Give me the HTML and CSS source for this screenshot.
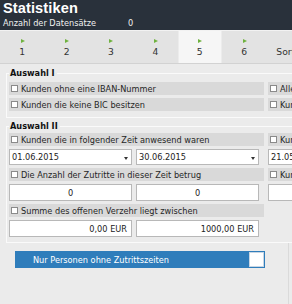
FILE: index.html
```html
<!DOCTYPE html>
<html lang="de">
<head>
<meta charset="utf-8">
<title>Statistiken</title>
<link rel="stylesheet" href="styles.css">
</head>
<body>
<div class="page">
  <header class="header">
    <h1 class="title">Statistiken</h1>
    <div class="count"><span class="count-label">Anzahl der Datensätze</span><span class="count-value">0</span></div>
  </header>
  <nav class="tabs">
    <div class="tab"><span class="arrow"></span><span class="num">1</span></div>
    <div class="tab"><span class="arrow"></span><span class="num">2</span></div>
    <div class="tab"><span class="arrow"></span><span class="num">3</span></div>
    <div class="tab"><span class="arrow"></span><span class="num">4</span></div>
    <div class="tab active"><span class="arrow"></span><span class="num">5</span></div>
    <div class="tab"><span class="arrow"></span><span class="num">6</span></div>
    <div class="tab wide"><span class="arrow hidden"></span><span class="num">Sortierung</span></div>
  </nav>
  <main class="content">
    <fieldset class="group">
      <legend class="legend">Auswahl I</legend>
      <div class="grid">
        <label class="row"><span class="cb"></span>Kunden ohne eine IBAN-Nummer</label>
        <label class="row"><span class="cb"></span>Alle Kunden</label>
        <label class="row"><span class="cb"></span>Kunden die keine BIC besitzen</label>
        <label class="row"><span class="cb"></span>Kunden ohne Mandat</label>
      </div>
    </fieldset>
    <fieldset class="group second">
      <legend class="legend">Auswahl II</legend>
      <div class="grid">
        <label class="row"><span class="cb"></span>Kunden die in folgender Zeit anwesend waren</label>
        <label class="row"><span class="cb"></span>Kunden mit Geburtstag</label>
        <div class="pair">
          <div class="field date">01.06.2015<span class="drop"></span></div>
          <div class="field date">30.06.2015<span class="drop"></span></div>
        </div>
        <div class="pair">
          <div class="field date">21.05.2015<span class="drop"></span></div>
        </div>
        <label class="row"><span class="cb"></span>Die Anzahl der Zutritte in dieser Zeit betrug</label>
        <label class="row"><span class="cb"></span>Kunden mit Karte</label>
        <div class="pair tall">
          <div class="field center">0</div>
          <div class="field center">0</div>
        </div>
        <div class="pair tall">
          <div class="field center"></div>
        </div>
        <label class="row"><span class="cb"></span>Summe des offenen Verzehr liegt zwischen</label>
        <div class="empty"></div>
        <div class="pair tall">
          <div class="field right">0,00 EUR</div>
          <div class="field right">1000,00 EUR</div>
        </div>
        <div class="empty"></div>
      </div>
    </fieldset>
    <section class="panel">
      <div class="toggle">
        <span class="toggle-label">Nur Personen ohne Zutrittszeiten</span>
        <span class="toggle-box"></span>
      </div>
    </section>
  </main>
</div>
</body>
</html>
```
FILE: styles.css
```css
html, body {
  margin: 0;
  padding: 0;
  width: 292px;
  height: 304px;
  overflow: hidden;
  background: #ebebeb;
}
body {
  font-family: "DejaVu Sans", Verdana, sans-serif;
  font-size: 8.2px;
  color: #222;
}
.page {
  width: 292px;
}
.header {
  background: #29313b;
  height: 30px;
  padding: 1px 3px 0 3px;
  box-sizing: border-box;
  color: #fff;
}
.title {
  margin: 0;
  font-family: "Liberation Sans", Arial, sans-serif;
  font-weight: bold;
  font-size: 14.6px;
  line-height: 15px;
  letter-spacing: 0.1px;
}
.count {
  display: flex;
  margin-top: 2px;
  line-height: 10px;
  color: #f0f0f0;
}
.count-label {
  width: 125px;
}
.tabs {
  display: flex;
  height: 34px;
  background: #e3e3e3;
  border-top: 1px solid #f2f2f2;
  border-bottom: 1px solid #d2d2d2;
  box-sizing: border-box;
  width: 420px;
}
.tab {
  width: 44.4px;
  flex: none;
  display: flex;
  flex-direction: column;
  align-items: center;
  padding-top: 8px;
  box-sizing: border-box;
  color: #333;
}
.tab.active {
  background: #f6f6f6;
  border-left: 1px solid #ececec;
  border-right: 1px solid #ececec;
}
.tab.wide {
  width: 80px;
  align-items: flex-start;
  padding-left: 10px;
}
.arrow {
  width: 0;
  height: 0;
  border-left: 4px solid #6fb23f;
  border-top: 2.5px solid transparent;
  border-bottom: 2.5px solid transparent;
  margin-bottom: 3px;
  margin-left: 1px;
}
.arrow.hidden {
  visibility: hidden;
}
.num {
  font-size: 9.2px;
  line-height: 11px;
}
.content {
  width: 460px;
  padding-top: 4px;
}
.group {
  margin: 0 0 0 6px;
  padding: 4px 0 6px 2px;
  border: 1px solid #fafafa;
  border-right: none;
  min-width: 0;
}
.group.second {
  margin-top: 3px;
  padding-top: 2px;
  padding-bottom: 5px;
}
.legend {
  font-weight: bold;
  padding: 0 2px 0 1px;
  line-height: 10px;
  color: #111;
}
.grid {
  display: grid;
  grid-template-columns: 255px 200px;
  column-gap: 4px;
  row-gap: 3px;
}
.row {
  display: flex;
  align-items: center;
  height: 13px;
  background: #d9d9d9;
  padding-left: 2px;
  white-space: nowrap;
  overflow: hidden;
  color: #262626;
}
.cb {
  width: 5px;
  height: 5px;
  border: 1px solid #8a8a8a;
  background: #fff;
  margin-right: 3px;
  flex: none;
}
.pair {
  display: flex;
  gap: 4px;
  height: 16px;
}
.pair.tall {
  height: 17px;
}
.field {
  width: 123px;
  box-sizing: border-box;
  border: 1px solid #b8b8b8;
  background: #fff;
  display: flex;
  align-items: center;
  padding: 0 2px;
  position: relative;
  color: #222;
}
.field.center {
  justify-content: center;
}
.field.right {
  justify-content: flex-end;
  padding-right: 4px;
}
.drop {
  position: absolute;
  right: 3px;
  top: 7px;
  width: 0;
  height: 0;
  border-top: 3px solid #333;
  border-left: 2px solid transparent;
  border-right: 2px solid transparent;
}
.panel {
  width: 289px;
  height: 62px;
  box-sizing: border-box;
  border-right: 1px solid #dadada;
  padding: 8px 0 0 15px;
}
.toggle {
  display: flex;
  align-items: center;
  width: 250px;
  height: 17px;
  background: #2f7dbb;
  box-sizing: border-box;
  padding-right: 1px;
}
.toggle-label {
  flex: 1;
  color: #fff;
  padding-left: 18px;
}
.toggle-box {
  width: 15px;
  height: 15px;
  background: #fff;
  border: 1px solid #c8d6e4;
  box-sizing: border-box;
}
```
